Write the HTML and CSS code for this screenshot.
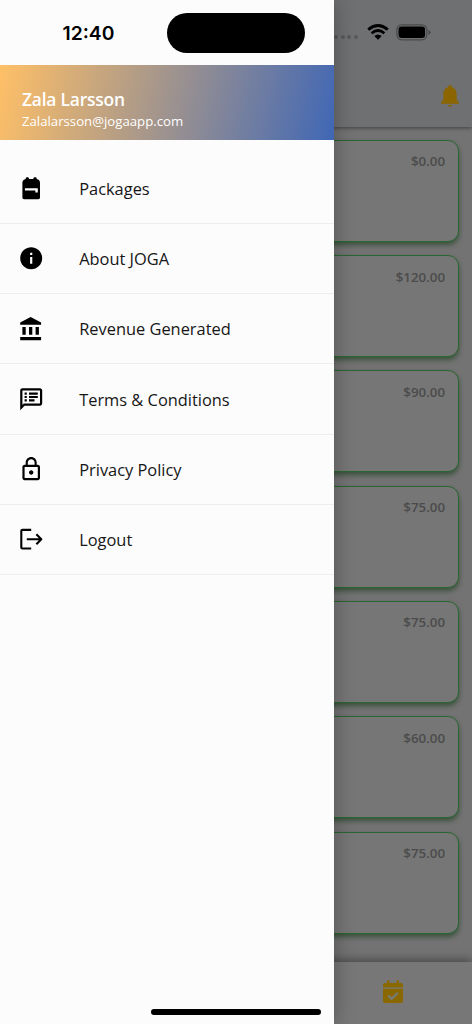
FILE: index.html
```html
<!DOCTYPE html>
<html lang="en">
<head>
<meta charset="utf-8">
<title>JOGA</title>
<link rel="stylesheet" href="styles.css">
</head>
<body>
<div class="screen">
  <main class="app">
    <header class="appbar">
      <div class="status">
        <span class="dots"><i></i><i></i><i></i><i></i></span>
        <svg class="wifi" viewBox="0 0 22 16"><g fill="none" stroke="#000" stroke-width="2.8"><path d="M1.200 5.600Q11-2.600 20.800 5.600"/><path d="M4.600 9.200Q11 3.800 17.400 9.200"/></g><path d="M7.300 12Q11 9 14.700 12L11 15.800z"/></svg>
        <svg class="battery" viewBox="0 0 35 17"><rect x=".8" y=".8" width="30" height="15" rx="5" fill="none" stroke="#484a4b" stroke-width="1.2"/><rect x="2.5" y="2.5" width="26.6" height="11.6" rx="3.3"/><path d="M32.400 5.800q2.200 1 2.200 2.500t-2.200 2.500z" fill="#484a4b"/></svg>
      </div>
      <svg class="bell" viewBox="0 0 18 22" fill="#8a6500"><path d="M9 0c1.100 0 1.800.8 1.800 1.800v.2c3 .8 4.800 3.400 4.800 6.500v5.600c0 1 1 2 2.400 3.400V18.800H0v-1.300c1.400-1.400 2.400-2.400 2.400-3.400V8.500c0-3.100 1.800-5.700 4.800-6.500v-.2C7.200.8 7.900 0 9 0zM6.700 20h4.600Q10.800 21.800 9 21.800T6.700 20z"/></svg>
    </header>
    <section class="cards">
      <article class="card">$0.00</article>
      <article class="card">$120.00</article>
      <article class="card">$90.00</article>
      <article class="card">$75.00</article>
      <article class="card">$75.00</article>
      <article class="card">$60.00</article>
      <article class="card">$75.00</article>
    </section>
    <nav class="tabs">
      <svg class="calendar" viewBox="0 0 20 23"><path fill="#8a6800" d="M0 7.500V5Q0 3 2 3h2V1.300Q4 0 5.300 0t1.300 1.300V3h6.800V1.300Q13.400 0 14.700 0T16 1.300V3h2q2 0 2 2v2.500zM0 8.700h20v12.300q0 2-2 2H2q-2 0-2-2z"/><path d="M5.300 15.700l3.300 3.200 6.300-6.200" fill="none" stroke="#787878" stroke-width="2.300"/></svg>
    </nav>
  </main>

  <aside class="drawer">
    <div class="clockbar"><time>12:40</time><span class="island"></span></div>
    <div class="profile">
      <div class="name">Zala Larsson</div>
      <div class="email">Zalalarsson@jogaapp.com</div>
    </div>
    <ul class="menu">
      <li><svg viewBox="0 0 24 24"><path fill-rule="evenodd" d="M20 7v13.500c0 .9-.7 1.500-1.500 1.500h-13C4.700 22 4 21.400 4 20.500V7c0-1.800 1.200-3 3-3.300V3.200c0-1.600 3-1.600 3 0v.5h4v-.5c0-1.600 3-1.600 3 0v.5c1.800.3 3 1.500 3 3.300zM6.300 12v2h9.500v2H18v-4H6.300z"/></svg>Packages</li>
      <li><svg viewBox="0 0 24 24"><path d="M12 2C6.480 2 2 6.480 2 12s4.480 10 10 10 10-4.480 10-10S17.520 2 12 2zm1 15h-2v-6h2v6zm0-8h-2V7h2v2z"/></svg>About JOGA</li>
      <li><svg viewBox="0 0 24 24"><path d="M4 10v7h3v-7H4zm6 0v7h3v-7h-3zM2 22h19v-3H2v3zm14-12v7h3v-7h-3zm-4.500-9L2 6v2h19V6l-9.500-5z"/></svg>Revenue Generated</li>
      <li><svg viewBox="0 0 24 24"><path d="M20 2H4c-1.100 0-1.990.9-1.990 2L2 22l4-4h14c1.100 0 2-.9 2-2V4c0-1.100-.9-2-2-2zm0 14H5.170L4 17.170V4h16v12zM6 12h2v2H6zm0-3h2v2H6zm0-3h2v2H6zm4 6h5v2h-5zm0-3h8v2h-8zm0-3h8v2h-8z"/></svg>Terms &amp; Conditions</li>
      <li><svg viewBox="0 0 24 24"><path d="M12 17c1.100 0 2-.9 2-2s-.9-2-2-2-2 .9-2 2 .9 2 2 2zm6-9h-1V6c0-2.760-2.240-5-5-5S7 3.240 7 6v2H6c-1.100 0-2 .9-2 2v10c0 1.100.9 2 2 2h12c1.100 0 2-.9 2-2V10c0-1.100-.9-2-2-2zM8.900 6c0-1.710 1.390-3.100 3.100-3.100s3.100 1.390 3.100 3.100v2H8.900V6zM18 20H6V10h12v10z"/></svg>Privacy Policy</li>
      <li><svg viewBox="0 0 24 24"><path d="M12 3.500H4Q3 3.500 3 4.500v15q0 1 1 1h8M8 12h13.300M16.700 7.500l4.500 4.500-4.500 4.500" fill="none" stroke="#000" stroke-width="1.900" stroke-linejoin="round"/></svg>Logout</li>
    </ul>
  </aside>
  <div class="home"></div>
</div>
</body>
</html>
```
FILE: styles.css
```css
* { box-sizing: border-box; }
body { margin: 0; font-family: "Open Sans", sans-serif; }
svg { display: block; }
.screen { position: relative; width: 472px; height: 1024px; overflow: hidden; }

.app { display: flex; flex-direction: column; height: 100%; background: #737373; }
.appbar {
  display: flex; flex-direction: column; align-items: flex-end; flex: none;
  height: 126.500px; padding: 23px 13px 0 0; background: #6e7072;
  box-shadow: 0 1px 4px rgba(0,0,0,.45); z-index: 1;
}
.status { display: flex; align-items: center; height: 18px; margin-right: 28px; }
.dots { display: flex; gap: 2.600px; margin: 10px 8.500px 0 0; }
.dots i { width: 4px; height: 4px; border-radius: 50%; background: #58595b; }
.wifi { width: 22px; height: 16px; margin-right: 7.500px; }
.battery { width: 35px; height: 17px; }
.bell { width: 18px; height: 22px; margin-top: 44px; }

.cards { flex: 1; display: flex; flex-direction: column; gap: 13.300px; padding: 13.300px 13.500px 0; }
.card {
  flex: none; height: 102px; padding: 11.500px 12.500px; text-align: right;
  font-size: 13.300px; line-height: 18px; font-weight: 600; color: #4b4b4b;
  background: #767676; border: 1.500px solid #2a6630; border-radius: 11px;
  box-shadow: 0 3px 5px rgba(20,60,24,.6);
}
.tabs {
  flex: none; height: 62px; padding: 18px 69px 0 0; display: flex; justify-content: flex-end;
  background: #777; box-shadow: 0 -2px 9px rgba(0,0,0,.4); z-index: 1;
}
.calendar { width: 20px; height: 23px; }

.drawer {
  position: absolute; z-index: 2; left: 0; top: 0; width: 333.500px; height: 100%;
  background: #fcfcfc; box-shadow: 0 0 20px rgba(0,0,0,.3);
}
.clockbar { display: flex; height: 65px; padding: 12.500px 0 0 62.500px; }
.clockbar time { width: 104.500px; font: 600 19.300px/40px Inter, sans-serif; color: #000; }
.island { width: 138px; height: 40.500px; border-radius: 21px; background: #000; }
.profile {
  height: 74.500px; padding: 23px 22px 0; color: #fff;
  background: linear-gradient(102deg, #ffc067 0%, #4067b5 100%);
}
.name { font-size: 17.400px; line-height: 23px; font-weight: 600; letter-spacing: -.2px; }
.email { font-size: 13.200px; line-height: 20px; }
.menu { list-style: none; margin: 0; padding: 14px 0 0; }
.menu li {
  display: flex; align-items: center; height: 70.300px; padding-left: 17.800px;
  border-bottom: 1px solid #eee; font-size: 16.400px; color: #161616;
}
.menu svg { flex: none; width: 26.400px; height: 26.400px; margin-right: 35px; fill: #000; }
.home {
  position: absolute; z-index: 3; left: 151px; bottom: 9px; width: 170px; height: 6px;
  border-radius: 3px; background: #000;
}
```
